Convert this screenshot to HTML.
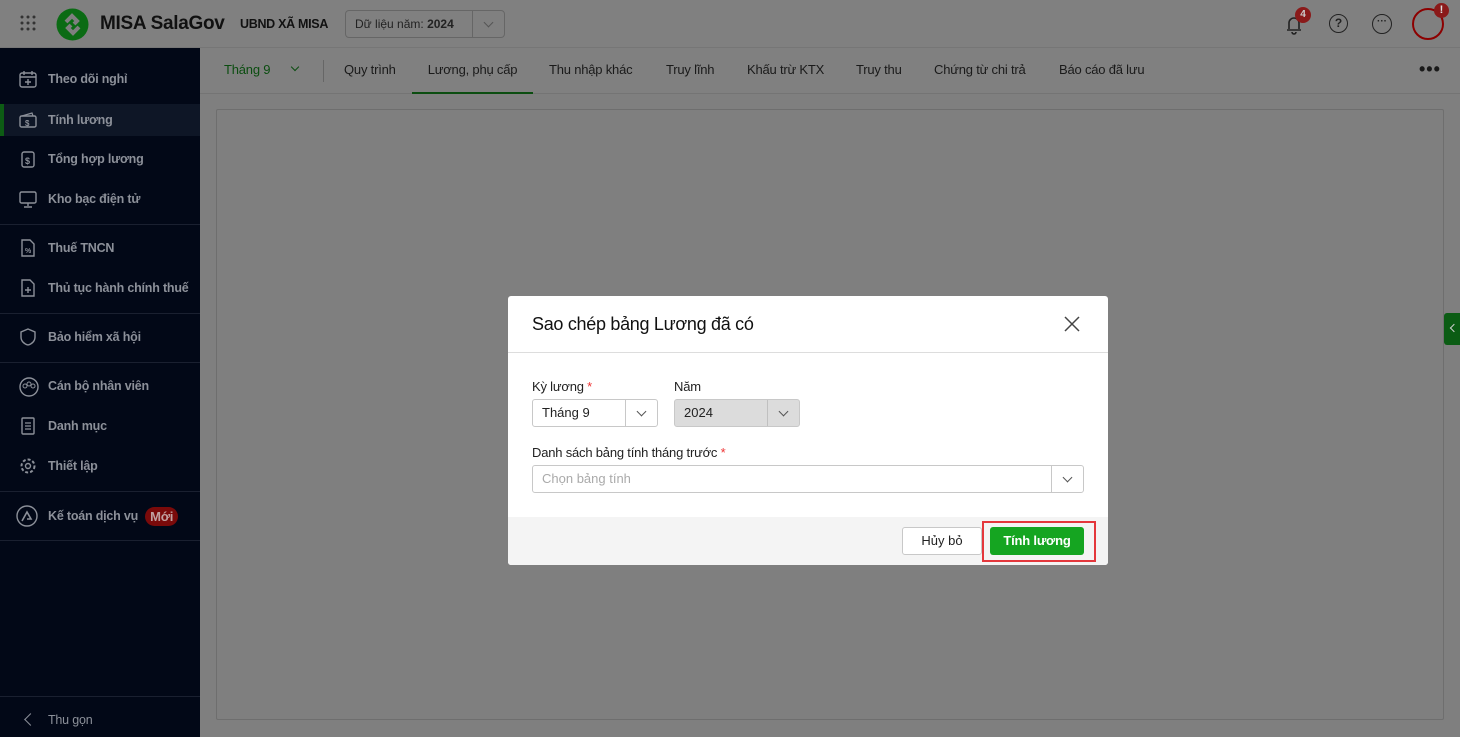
<!DOCTYPE html>
<html><head><meta charset="utf-8"><style>
*{box-sizing:border-box;margin:0;padding:0}
body{width:1460px;height:737px;overflow:hidden;font-family:"Liberation Sans",sans-serif;background:#7f7f7f;position:relative}
.hdr{position:absolute;left:0;top:0;width:1460px;height:48px;background:#808080;border-bottom:1px solid #767676}
.side{position:absolute;left:0;top:48px;width:200px;height:689px;background:#020817}
.item{position:absolute;left:0;width:200px;height:32px;color:#8c9099;font-size:12.5px;font-weight:bold;display:flex;align-items:center;padding-left:48px;letter-spacing:-0.2px;white-space:nowrap}
.item svg{position:absolute;left:19px;top:7px}
.div{position:absolute;left:0;width:200px;height:1px;background:#1a2030}
.tabs{position:absolute;left:200px;top:48px;width:1260px;height:46px;background:#808080;border-bottom:1px solid #747474}
.tab{position:absolute;top:0;height:46px;line-height:44px;font-size:13px;color:#1a1a1a;letter-spacing:-0.2px}
.panel{position:absolute;left:216px;top:109px;width:1228px;height:611px;border:1px solid #6e6e6e;background:#7f7f7f;border-radius:2px}
.dlg{position:absolute;left:508px;top:296px;width:600px;height:269px;background:#fff;border-radius:3px;overflow:hidden}
.lbl{position:absolute;font-size:13px;color:#222;letter-spacing:-0.2px}
.sel{position:absolute;height:28px;border:1px solid #c8c8c8;border-radius:3px;font-size:13px;color:#222;line-height:26px;padding-left:9px;background:#fff}
.sel .ar{position:absolute;right:0;top:0;width:32px;height:26px;border-left:1px solid #c8c8c8}
.ar:after{content:"";position:absolute;left:12px;top:8px;width:6px;height:6px;border-right:1.3px solid #555;border-bottom:1.3px solid #555;transform:rotate(45deg)}
</style></head><body>
<div class="hdr">
<svg style="position:absolute;left:20px;top:15px" width="16" height="16"><g fill="#333"><circle cx="2" cy="2" r="1.5"/><circle cx="8" cy="2" r="1.5"/><circle cx="14" cy="2" r="1.5"/><circle cx="2" cy="8" r="1.5"/><circle cx="8" cy="8" r="1.5"/><circle cx="14" cy="8" r="1.5"/><circle cx="2" cy="14" r="1.5"/><circle cx="8" cy="14" r="1.5"/><circle cx="14" cy="14" r="1.5"/></g></svg>
<svg style="position:absolute;left:56px;top:8px" width="33" height="33"><circle cx="16.5" cy="16.5" r="16" fill="#0b6b14"/><path d="M10 14l6-6 5 5-3 3M23 19l-6 6-5-5 3-3" stroke="#7f7f7f" stroke-width="4" fill="none"/></svg>
<div style="position:absolute;left:100px;top:13px;font-size:19px;font-weight:bold;color:#111;letter-spacing:-0.3px">MISA SalaGov</div>
<div style="position:absolute;left:240px;top:17px;font-size:12.5px;font-weight:bold;color:#111;letter-spacing:-0.3px">UBND XÃ MISA</div>
<div style="position:absolute;left:345px;top:10px;width:160px;height:28px;border:1px solid #666;border-radius:4px;font-size:12px;color:#222;line-height:26px;padding-left:9px">Dữ liệu năm: <b>2024</b><span class="ar" style="position:absolute;right:0;top:0;width:32px;height:26px;border-left:1px solid #666"></span></div>
<svg style="position:absolute;left:1283px;top:13px" width="22" height="22"><path d="M4 17h14M6 16V10a5 5 0 0110 0v6M9 19a2 2 0 004 0" stroke="#222" stroke-width="1.6" fill="none"/></svg>
<div style="position:absolute;left:1295px;top:7px;width:16px;height:16px;border-radius:8px;background:#8a1a1a;color:#ccc;font-size:10px;font-weight:bold;text-align:center;line-height:16px">4</div>
<div style="position:absolute;left:1329px;top:14px;width:19px;height:19px;border:1.5px solid #222;border-radius:50%;font-size:12px;text-align:center;line-height:16px;color:#222;font-weight:bold">?</div>
<div style="position:absolute;left:1372px;top:14px;width:20px;height:20px;border:1.5px solid #222;border-radius:50%;font-size:10px;text-align:center;line-height:14px;color:#222;font-weight:bold">···</div>
<div style="position:absolute;left:1412px;top:8px;width:32px;height:32px;border:2px solid #8c0000;border-radius:50%"></div>
<div style="position:absolute;left:1434px;top:3px;width:15px;height:15px;border-radius:8px;background:#8a1a1a;color:#ddd;font-size:11px;font-weight:bold;text-align:center;line-height:15px">!</div>
</div>
<div class="side">
<div class="item" style="top:15px"><svg width="18" height="18"><rect x="1" y="3" width="16" height="14" rx="2" stroke="#8c9099" stroke-width="1.4" fill="none"/><path d="M1 7h16M5 1v4M13 1v4M9 9v6M6 12h6" stroke="#8c9099" stroke-width="1.4"/></svg>Theo dõi nghỉ</div>
<div class="item" style="top:56px;background:#0e1626;color:#8c9099"><span style="position:absolute;left:0;top:0;width:4px;height:32px;background:#0d5c14"></span><svg width="18" height="18"><rect x="1" y="5" width="16" height="11" rx="1.5" stroke="#8c9099" stroke-width="1.4" fill="none"/><path d="M3 5l10-3 1 3" stroke="#8c9099" stroke-width="1.2" fill="none"/><text x="6" y="15" font-size="8" fill="#8c9099">$</text></svg>Tính lương</div>
<div class="item" style="top:95px"><svg width="18" height="18"><rect x="3" y="2" width="12" height="15" rx="2" stroke="#8c9099" stroke-width="1.4" fill="none"/><text x="6" y="14" font-size="9" fill="#8c9099">$</text></svg>Tổng hợp lương</div>
<div class="item" style="top:135px"><svg width="18" height="18"><rect x="1" y="2" width="16" height="11" rx="1.5" stroke="#8c9099" stroke-width="1.4" fill="none"/><path d="M9 13v3M5 17h8" stroke="#8c9099" stroke-width="1.4"/></svg>Kho bạc điện tử</div>
<div class="div" style="top:176px"></div>
<div class="item" style="top:184px"><svg width="18" height="18"><path d="M3 1h8l4 4v12H3z" stroke="#8c9099" stroke-width="1.4" fill="none"/><text x="6" y="14" font-size="7" fill="#8c9099">%</text></svg>Thuế TNCN</div>
<div class="item" style="top:224px"><svg width="18" height="18"><path d="M3 1h8l4 4v12H3z M9 8v6M6 11h6" stroke="#8c9099" stroke-width="1.4" fill="none"/></svg>Thủ tục hành chính thuế</div>
<div class="div" style="top:265px"></div>
<div class="item" style="top:273px"><svg width="18" height="18"><path d="M9 1l7 3v5c0 4-3 7-7 8-4-1-7-4-7-8V4z" stroke="#8c9099" stroke-width="1.4" fill="none"/></svg>Bảo hiểm xã hội</div>
<div class="div" style="top:314px"></div>
<div class="item" style="top:322px"><svg width="20" height="20"><circle cx="10" cy="10" r="9" stroke="#8c9099" stroke-width="1.4" fill="none"/><circle cx="6" cy="9" r="2" stroke="#8c9099" fill="none"/><circle cx="10" cy="7" r="2" stroke="#8c9099" fill="none"/><circle cx="14" cy="9" r="2" stroke="#8c9099" fill="none"/></svg>Cán bộ nhân viên</div>
<div class="item" style="top:362px"><svg width="18" height="18"><rect x="3" y="1" width="12" height="16" rx="1" stroke="#8c9099" stroke-width="1.4" fill="none"/><path d="M6 6h6M6 9h6M6 12h6" stroke="#8c9099" stroke-width="1.3"/></svg>Danh mục</div>
<div class="item" style="top:402px"><svg width="18" height="18"><circle cx="9" cy="9" r="6.5" stroke="#8c9099" stroke-width="2" stroke-dasharray="3 2" fill="none"/><circle cx="9" cy="9" r="2.5" stroke="#8c9099" stroke-width="1.4" fill="none"/></svg>Thiết lập</div>
<div class="div" style="top:443px"></div>
<div class="item" style="top:452px"><svg width="22" height="22" style="left:16px;top:5px"><circle cx="11" cy="11" r="10" stroke="#8c9099" stroke-width="1.4" fill="none"/><path d="M6 16l5-9 4 7h-4" stroke="#8c9099" stroke-width="1.6" fill="none"/></svg>Kế toán dịch vụ<span style="margin-left:7px;background:#7a0a0a;color:#c0a0a0;border-radius:10px;padding:2px 5px;font-size:13px">Mới</span></div>
<div class="div" style="top:492px"></div>
<div class="div" style="top:648px"></div>
<div class="item" style="top:656px;font-weight:normal;color:#8c9099"><span style="position:absolute;left:26px;top:11px;width:9px;height:9px;border-left:1.6px solid #8c9099;border-bottom:1.6px solid #8c9099;transform:rotate(45deg)"></span>Thu gọn</div>
</div>
<div class="tabs">
<div class="tab" style="left:24px;color:#0b4d10">Tháng 9</div>
<span style="position:absolute;left:92px;top:16px;width:6px;height:6px;border-right:1.5px solid #0b4d10;border-bottom:1.5px solid #0b4d10;transform:rotate(45deg)"></span>
<span style="position:absolute;left:123px;top:12px;width:1px;height:22px;background:#666"></span>
<div class="tab" style="left:144px">Quy trình</div>
<div class="tab" style="left:212px;width:121px;text-align:center;border-bottom:2px solid #0b4d10">Lương, phụ cấp</div>
<div class="tab" style="left:349px">Thu nhập khác</div>
<div class="tab" style="left:466px">Truy lĩnh</div>
<div class="tab" style="left:547px">Khấu trừ KTX</div>
<div class="tab" style="left:656px">Truy thu</div>
<div class="tab" style="left:734px">Chứng từ chi trả</div>
<div class="tab" style="left:859px">Báo cáo đã lưu</div>
<div class="tab" style="left:1219px;font-size:18px;font-weight:bold;letter-spacing:1px;line-height:42px">•••</div>
</div>
<div class="panel"></div>
<div style="position:absolute;left:1444px;top:313px;width:16px;height:32px;background:#0b5c14;border-radius:3px 0 0 3px"><span style="position:absolute;left:7px;top:12px;width:6px;height:6px;border-left:1.4px solid #ccc;border-bottom:1.4px solid #ccc;transform:rotate(45deg)"></span></div>
<div class="dlg">
<div style="position:absolute;left:24px;top:18px;font-size:18px;color:#111;letter-spacing:-0.3px">Sao chép bảng Lương đã có</div>
<svg style="position:absolute;left:556px;top:20px" width="16" height="16"><path d="M1 1l14 14M15 1L1 15" stroke="#444" stroke-width="1.5"/></svg>
<div style="position:absolute;left:0;top:56px;width:600px;height:1px;background:#ddd"></div>
<div class="lbl" style="left:24px;top:83px">Kỳ lương <span style="color:#e33">*</span></div>
<div class="lbl" style="left:166px;top:83px">Năm</div>
<div class="sel" style="left:24px;top:103px;width:126px">Tháng 9<span class="ar"></span></div>
<div class="sel" style="left:166px;top:103px;width:126px;background:#dcdcdc">2024<span class="ar" style="border-left-color:#c0c0c0"></span></div>
<div class="lbl" style="left:24px;top:149px">Danh sách bảng tính tháng trước <span style="color:#e33">*</span></div>
<div class="sel" style="left:24px;top:169px;width:552px;color:#aaa">Chọn bảng tính<span class="ar"></span></div>
<div style="position:absolute;left:0;top:221px;width:600px;height:48px;background:#f4f4f4"></div>
<div style="position:absolute;left:394px;top:231px;width:80px;height:28px;border:1px solid #c8c8c8;border-radius:3px;background:#fff;font-size:13px;text-align:center;line-height:26px;color:#222">Hủy bỏ</div>
<div style="position:absolute;left:474px;top:225px;width:114px;height:41px;border:2px solid #e4373c"></div>
<div style="position:absolute;left:482px;top:231px;width:94px;height:28px;background:#15a521;border-radius:3px;color:#fff;font-size:13px;font-weight:bold;text-align:center;line-height:28px;letter-spacing:-0.2px">Tính lương</div>
</div>
</body></html>
